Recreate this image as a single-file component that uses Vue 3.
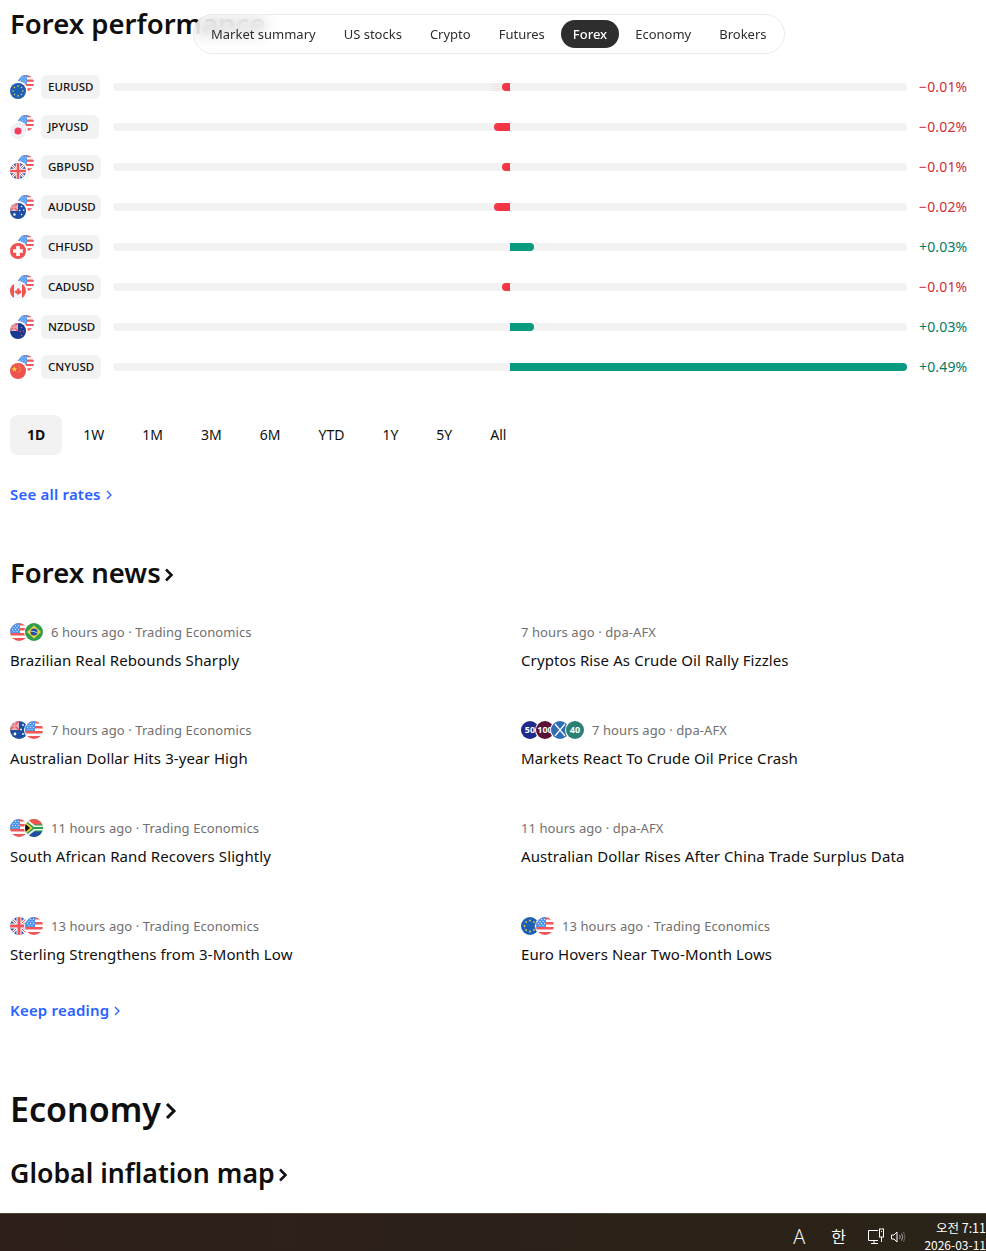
<script setup>
const tabs = ['Market summary', 'US stocks', 'Crypto', 'Futures', 'Forex', 'Economy', 'Brokers']
const periods = ['1D', '1W', '1M', '3M', '6M', 'YTD', '1Y', '5Y', 'All']

// bar = px out from the middle of the track
const rates = [
  { pair: 'EURUSD', flag: 'eu', change: '−0.01%', bar: 8, up: false, ghost: true },
  { pair: 'JPYUSD', flag: 'jp', change: '−0.02%', bar: 16, up: false },
  { pair: 'GBPUSD', flag: 'gb', change: '−0.01%', bar: 8, up: false },
  { pair: 'AUDUSD', flag: 'au', change: '−0.02%', bar: 16, up: false },
  { pair: 'CHFUSD', flag: 'ch', change: '+0.03%', bar: 24, up: true },
  { pair: 'CADUSD', flag: 'ca', change: '−0.01%', bar: 8, up: false },
  { pair: 'NZDUSD', flag: 'nz', change: '+0.03%', bar: 24, up: true },
  { pair: 'CNYUSD', flag: 'cn', change: '+0.49%', bar: 397, up: true }
]

const news = [
  { flags: ['us', 'br'], time: '6 hours ago', src: 'Trading Economics', title: 'Brazilian Real Rebounds Sharply' },
  { flags: [], time: '7 hours ago', src: 'dpa-AFX', title: 'Cryptos Rise As Crude Oil Rally Fizzles' },
  { flags: ['au', 'us'], time: '7 hours ago', src: 'Trading Economics', title: 'Australian Dollar Hits 3-year High' },
  { flags: [], badges: true, time: '7 hours ago', src: 'dpa-AFX', title: 'Markets React To Crude Oil Price Crash' },
  { flags: ['us', 'za'], time: '11 hours ago', src: 'Trading Economics', title: 'South African Rand Recovers Slightly' },
  { flags: [], time: '11 hours ago', src: 'dpa-AFX', title: 'Australian Dollar Rises After China Trade Surplus Data' },
  { flags: ['gb', 'us'], time: '13 hours ago', src: 'Trading Economics', title: 'Sterling Strengthens from 3-Month Low' },
  { flags: ['eu', 'us'], time: '13 hours ago', src: 'Trading Economics', title: 'Euro Hovers Near Two-Month Lows' }
]

const badges = [
  { text: '50', color: '#1c2a8c' },
  { text: '100', color: '#5a1238' },
  { text: '', color: '#2f6db5', cross: true },
  { text: '40', color: '#2a8072' }
]
</script>

<template>
  <!-- flag sprites -->
  <svg class="sprites" aria-hidden="true">
    <symbol id="us" viewBox="0 0 18 18">
      <rect width="18" height="18" fill="#fff" />
      <path d="M0 0h18v2.500H0zM0 5h18v2.500H0zM0 10h18v2.500H0zM0 15h18v3H0z" fill="#f0555a" />
      <rect width="10" height="10" fill="#4f97ee" />
      <path d="M2 2h1v1H2zM5 2h1v1H5zM8 2h1v1H8zM3.500 4h1v1h-1zM6.500 4h1v1h-1zM2 6h1v1H2zM5 6h1v1H5zM8 6h1v1H8zM3.500 8h1v1h-1zM6.500 8h1v1h-1z" fill="#fff" opacity=".8" />
    </symbol>
    <symbol id="eu" viewBox="0 0 18 18">
      <rect width="18" height="18" fill="#1c5fb3" />
      <g fill="#f5cf3c">
        <circle cx="9" cy="3.500" r=".9" /><circle cx="9" cy="14.500" r=".9" /><circle cx="3.500" cy="9" r=".9" /><circle cx="14.500" cy="9" r=".9" />
        <circle cx="5.100" cy="5.100" r=".9" /><circle cx="12.900" cy="5.100" r=".9" /><circle cx="5.100" cy="12.900" r=".9" /><circle cx="12.900" cy="12.900" r=".9" />
      </g>
    </symbol>
    <symbol id="jp" viewBox="0 0 18 18">
      <rect width="18" height="18" fill="#eff1f8" />
      <circle cx="9" cy="9" r="4" fill="#f5405c" />
    </symbol>
    <symbol id="gb" viewBox="0 0 18 18">
      <rect width="18" height="18" fill="#2b5cab" />
      <path d="M0 0l18 18M18 0L0 18" stroke="#fff" stroke-width="3" />
      <path d="M0 0l18 18M18 0L0 18" stroke="#f0555a" stroke-width="1" />
      <path d="M9 0v18M0 9h18" stroke="#fff" stroke-width="5" />
      <path d="M9 0v18M0 9h18" stroke="#f0555a" stroke-width="3" />
    </symbol>
    <symbol id="au" viewBox="0 0 18 18">
      <rect width="18" height="18" fill="#1c4ea3" />
      <rect width="9" height="9" fill="#c9c4d8" />
      <path d="M0 0l9 9M9 0L0 9" stroke="#f0555a" stroke-width="1.600" />
      <path d="M4.500 0v9M0 4.500h9" stroke="#f4a0a8" stroke-width="1.500" />
      <g fill="#fff">
        <circle cx="13" cy="4" r=".9" /><circle cx="15.500" cy="8" r=".9" /><circle cx="11" cy="8.500" r=".9" /><circle cx="13" cy="13" r=".9" /><circle cx="5" cy="13" r="1.400" />
      </g>
    </symbol>
    <symbol id="ch" viewBox="0 0 18 18">
      <rect width="18" height="18" fill="#f0524f" />
      <path d="M7 3.500h4V7h3.500v4H11v3.500H7V11H3.500V7H7z" fill="#fff" />
    </symbol>
    <symbol id="ca" viewBox="0 0 18 18">
      <rect width="18" height="18" fill="#f4f5fa" />
      <path d="M0 0h4.500v18H0zM13.500 0H18v18h-4.500z" fill="#f0524f" />
      <path d="M9 5l.8 1.600 1-.4-.4 2.400 1-.8.500 1 1-.2-.5 1.600.4.400-2.800 2-.1.400-.9-.2V14h-.4v-1.600l-.9.200-.1-.4-2.800-2 .4-.4L5.700 8.600l1 .2.500-1 1 .8-.4-2.400 1 .4z" fill="#f0524f" />
    </symbol>
    <symbol id="nz" viewBox="0 0 18 18">
      <rect width="18" height="18" fill="#17398f" />
      <rect width="9" height="9" fill="#c9c4d8" />
      <path d="M0 0l9 9M9 0L0 9" stroke="#f0555a" stroke-width="1.600" />
      <path d="M4.500 0v9M0 4.500h9" stroke="#f4a0a8" stroke-width="1.500" />
      <g fill="#f0555a">
        <circle cx="13" cy="5" r=".9" /><circle cx="15" cy="9" r=".9" /><circle cx="11.500" cy="9.500" r=".9" /><circle cx="13" cy="14" r=".9" />
      </g>
    </symbol>
    <symbol id="cn" viewBox="0 0 18 18">
      <rect width="18" height="18" fill="#f0524f" />
      <path d="M5 3.500l.9 2.300 2.400.1-1.900 1.500.7 2.400L5 8.400 2.900 9.800l.7-2.400L1.700 5.900l2.400-.1z" fill="#f7d23e" />
      <g fill="#f7d23e">
        <circle cx="10" cy="3.500" r=".6" /><circle cx="11.500" cy="5.500" r=".6" /><circle cx="11.500" cy="8" r=".6" /><circle cx="10" cy="10" r=".6" />
      </g>
    </symbol>
    <symbol id="br" viewBox="0 0 18 18">
      <rect width="18" height="18" fill="#2e9e4f" />
      <path d="M9 2.500L16 9l-7 6.500L2 9z" fill="#f5cf3c" />
      <circle cx="9" cy="9" r="3.500" fill="#1f4f9f" />
      <path d="M5.600 8.300q3.500-.5 6.700 1.700" stroke="#fff" stroke-width=".7" fill="none" />
    </symbol>
    <symbol id="za" viewBox="0 0 18 18">
      <rect width="18" height="18" fill="#2e9e4f" />
      <path d="M0 0h18v5.500H8z" fill="#f0524f" />
      <path d="M0 18h18v-5.500H8z" fill="#1f4f9f" />
      <path d="M0 0h2l8 6.500h8v5h-8L2 18H0z" fill="#fff" opacity=".9" />
      <path d="M0 1l9 7h9v2H9l-9 7z" fill="#2e9e4f" />
      <path d="M0 2.500L7.500 9 0 15.500z" fill="#f5cf3c" />
      <path d="M0 4.500L5 9l-5 4.500z" fill="#111" />
    </symbol>
  </svg>

  <div class="page">
    <nav class="tabs">
      <span v-for="t in tabs" :key="t" class="tab" :class="{ on: t === 'Forex' }">{{ t }}</span>
    </nav>

    <h2 class="title">Forex performance</h2>

    <div class="rates">
      <div v-for="r in rates" :key="r.pair" class="rate">
        <span class="pair-flags">
          <svg class="flag-back"><use href="#us" /></svg>
          <svg class="flag-front"><use :href="'#' + r.flag" /></svg>
        </span>
        <span class="pair-col"><span class="pair">{{ r.pair }}</span></span>
        <div class="track">
          <div class="side left">
            <i v-if="r.ghost" class="ghost"></i>
            <i v-if="!r.up" class="fill down" :style="{ width: r.bar + 'px' }"></i>
          </div>
          <div class="side">
            <i v-if="r.up" class="fill up" :style="{ width: r.bar + 'px' }"></i>
          </div>
        </div>
        <span class="change" :class="r.up ? 'pos' : 'neg'">{{ r.change }}</span>
      </div>
    </div>

    <div class="periods">
      <span v-for="p in periods" :key="p" class="period" :class="{ on: p === '1D' }">{{ p }}</span>
    </div>

    <a class="more rates-more">See all rates <svg class="chev" viewBox="0 0 6 10"><path d="M1 1l4 4-4 4" /></svg></a>

    <h2 class="heading news-head">Forex news<svg class="head-chev" viewBox="0 0 10 16"><path d="M2 2.500L7.500 8 2 13.500" /></svg></h2>

    <div class="news">
      <div v-for="n in news" :key="n.title" class="item">
        <div class="meta">
          <span v-if="n.flags.length" class="flags">
            <svg v-for="f in n.flags" :key="f" class="flag"><use :href="'#' + f" /></svg>
          </span>
          <span v-if="n.badges" class="flags tickers">
            <span v-for="b in badges" :key="b.color" class="ticker" :style="{ background: b.color }">
              <svg v-if="b.cross" class="cross" viewBox="0 0 18 18"><path d="M4 3l10 12M14 3L4 15" /></svg>
              <template v-else>{{ b.text }}</template>
            </span>
          </span>
          <span>{{ n.time }} · {{ n.src }}</span>
        </div>
        <div class="news-title">{{ n.title }}</div>
      </div>
    </div>

    <a class="more read-more">Keep reading <svg class="chev" viewBox="0 0 6 10"><path d="M1 1l4 4-4 4" /></svg></a>

    <h1 class="big">Economy<svg class="big-chev" viewBox="0 0 12 20"><path d="M2 3l7 7-7 7" /></svg></h1>
    <h2 class="heading inflation">Global inflation map<svg class="head-chev" viewBox="0 0 10 16"><path d="M2 2.500L7.500 8 2 13.500" /></svg></h2>
  </div>

  <footer class="taskbar">
    <span class="tb-a">A</span>
    <span class="tb-han">한</span>
    <svg class="tb-net" viewBox="0 0 18 18" fill="none" stroke="#fff" stroke-width="1">
      <path d="M11 2.500H1.500v10H11M4 15.500h7M7 12.500v3" />
      <rect x="12.500" y="1" width="4" height="8" />
      <path d="M14.500 3v1M14.500 9v5" />
    </svg>
    <svg class="tb-vol" viewBox="0 0 16 16" fill="none" stroke="#fff" stroke-width="1">
      <path d="M1.500 6h2.500l3-3v10l-3-3H1.500z" />
      <path d="M9.500 6q1.500 2 0 4M11.500 4.500q2.500 3.500 0 7" opacity=".6" />
      <path d="M13.500 3q3 5 0 10" opacity=".3" />
    </svg>
    <div class="clock">
      <div class="clock-time">오전 7:11</div>
      <div>2026-03-11</div>
    </div>
  </footer>
</template>

<style>
html, body {
  background: #fff;
  overflow: hidden;
}
</style>

<style scoped>
.sprites {
  position: absolute;
  width: 0;
  height: 0;
}
.page {
  position: relative;
  height: 1251px;
  padding: 0 10px;
  box-sizing: border-box;
  font-family: "Noto Sans", "Liberation Sans", sans-serif;
  color: #0f0f0f;
  background: #fff;
  overflow: hidden;
}
.tabs {
  position: absolute;
  left: 193px;
  top: 14px;
  z-index: 2;
  display: flex;
  align-items: center;
  gap: 4px;
  height: 40px;
  padding: 0 5px;
  box-sizing: border-box;
  border: 1px solid #ebebeb;
  border-radius: 20px;
  background: rgba(255, 255, 255, 0.7);
  backdrop-filter: blur(8px);
  font-size: 13px;
}
.tab {
  height: 28px;
  line-height: 28px;
  padding: 0 12px;
  border-radius: 14px;
  color: #2e2e2e;
  white-space: nowrap;
}
.tab.on {
  background: #2e2e2e;
  color: #fff;
  font-weight: 500;
}
.title {
  margin: 0;
  height: 67px;
  padding-top: 6px;
  box-sizing: border-box;
  font-size: 27.5px;
  line-height: 36px;
  font-weight: 600;
  white-space: nowrap;
}
.rate {
  display: flex;
  align-items: center;
  height: 40px;
  gap: 12px;
}
.pair-flags {
  position: relative;
  flex: none;
  width: 24px;
  height: 24px;
  margin-right: -5px;
}
.flag-back, .flag-front {
  position: absolute;
  width: 16px;
  height: 16px;
  border-radius: 50%;
}
.flag-back {
  right: 0;
  top: 0;
}
.flag-front {
  left: 0;
  bottom: 0;
  box-shadow: 0 0 0 2px #fff;
}
.pair-col {
  flex: none;
  display: flex;
  width: 60px;
}
.pair {
  display: block;
  min-width: 58px;
  height: 24px;
  line-height: 23px;
  padding: 0 7px;
  box-sizing: border-box;
  border-radius: 6px;
  background: #f2f2f2;
  font-size: 11.5px;
  font-weight: 500;
  white-space: nowrap;
}
.track {
  flex: 1;
  display: flex;
  height: 8px;
  border-radius: 4px;
  background: #f2f2f2;
}
.side {
  flex: 1;
  display: flex;
  min-width: 0;
}
.side.left {
  justify-content: flex-end;
}
.fill {
  display: block;
  height: 8px;
}
.fill.down {
  background: #f23645;
  border-radius: 4px 0 0 4px;
}
.fill.up {
  background: #089981;
  border-radius: 0 4px 4px 0;
}
.ghost {
  display: block;
  width: 10px;
  height: 8px;
  background: repeating-linear-gradient(0deg, #f9c9cd 0 1px, transparent 1px 2px);
  opacity: 0.4;
}
.change {
  flex: none;
  width: 57px;
  margin-bottom: 2px;
  font-size: 14px;
  letter-spacing: 0.15px;
  white-space: nowrap;
}
.neg {
  color: #cc2f3c;
}
.pos {
  color: #067a68;
}
.periods {
  display: flex;
  gap: 4px;
  margin-top: 28px;
}
.period {
  height: 40px;
  line-height: 40px;
  padding: 0 17px;
  border-radius: 8px;
  font-size: 14px;
}
.period.on {
  background: #f2f2f2;
  font-weight: 700;
}
.more {
  display: flex;
  align-items: center;
  gap: 5px;
  color: #2962ff;
  font-size: 15px;
  font-weight: 600;
  letter-spacing: 0.2px;
  line-height: 20px;
}
.rates-more {
  margin-top: 29px;
}
.chev {
  width: 6px;
  height: 10px;
  margin-top: 2px;
  fill: none;
  stroke: #2962ff;
  stroke-width: 1.300;
}
.heading {
  display: flex;
  align-items: center;
  margin: 0;
  font-size: 27.5px;
  line-height: 36px;
  font-weight: 600;
}
.news-head {
  margin-top: 51px;
}
.head-chev {
  width: 10px;
  height: 16px;
  margin: 3px 0 0 3px;
  fill: none;
  stroke: #0f0f0f;
  stroke-width: 2.500;
}
.news {
  display: grid;
  grid-template-columns: 511px 1fr;
  margin-top: 32px;
}
.item {
  height: 98px;
}
.meta {
  display: flex;
  align-items: center;
  gap: 8px;
  height: 18px;
  font-size: 13px;
  letter-spacing: 0.08px;
  color: #707070;
  white-space: nowrap;
}
.flags {
  display: flex;
  flex: none;
}
.flag {
  width: 18px;
  height: 18px;
  border-radius: 50%;
  box-shadow: 0 0 0 1px #fff;
}
.flag + .flag {
  margin-left: -3px;
}
.ticker {
  width: 18px;
  height: 18px;
  border-radius: 50%;
  box-shadow: 0 0 0 1px #fff;
  margin-right: -3px;
  color: #fff;
  font-size: 9px;
  font-weight: 700;
  line-height: 18px;
  text-align: center;
  overflow: hidden;
}
.cross {
  display: block;
  width: 18px;
  height: 18px;
  fill: none;
  stroke: #fff;
  stroke-width: 1.200;
}
.tickers {
  margin-right: 3px;
}
.news-title {
  margin-top: 7px;
  font-size: 15px;
  letter-spacing: 0.1px;
  line-height: 24px;
  white-space: nowrap;
}
.read-more {
  margin-top: -15px;
}
.big {
  display: flex;
  align-items: center;
  margin: 67px 0 0;
  font-size: 34px;
  line-height: 44px;
  font-weight: 600;
}
.big-chev {
  width: 12px;
  height: 20px;
  margin: 4px 0 0 4px;
  fill: none;
  stroke: #0f0f0f;
  stroke-width: 3;
}
.inflation {
  margin-top: 24px;
  font-size: 26.7px;
}
.taskbar {
  position: fixed;
  left: 0;
  right: 0;
  bottom: 0;
  z-index: 3;
  height: 38px;
  display: flex;
  align-items: center;
  justify-content: flex-end;
  box-sizing: border-box;
  background: linear-gradient(90deg, #2d1f18, #2a2318);
  border-top: 1px solid #4a443a;
  color: #fff;
  font-family: "Noto Sans CJK KR", "Noto Sans", sans-serif;
  overflow: hidden;
}
.tb-a {
  font-family: "Open Sans", sans-serif;
  font-weight: 300;
  font-size: 20px;
  margin-right: 26px;
  margin-top: 8px;
}
.tb-han {
  font-size: 16px;
  margin-right: 21px;
  margin-top: 6px;
}
.tb-net {
  width: 18px;
  height: 18px;
  margin-right: 5px;
  margin-top: 8px;
}
.tb-vol {
  width: 16px;
  height: 16px;
  margin-right: 18px;
  margin-top: 8px;
}
.clock {
  flex: none;
  width: 62px;
  margin-top: 6px;
  font-size: 12px;
  line-height: 17px;
  text-align: right;
  white-space: nowrap;
}
.clock-time {
  font-size: 12.5px;
}
</style>
